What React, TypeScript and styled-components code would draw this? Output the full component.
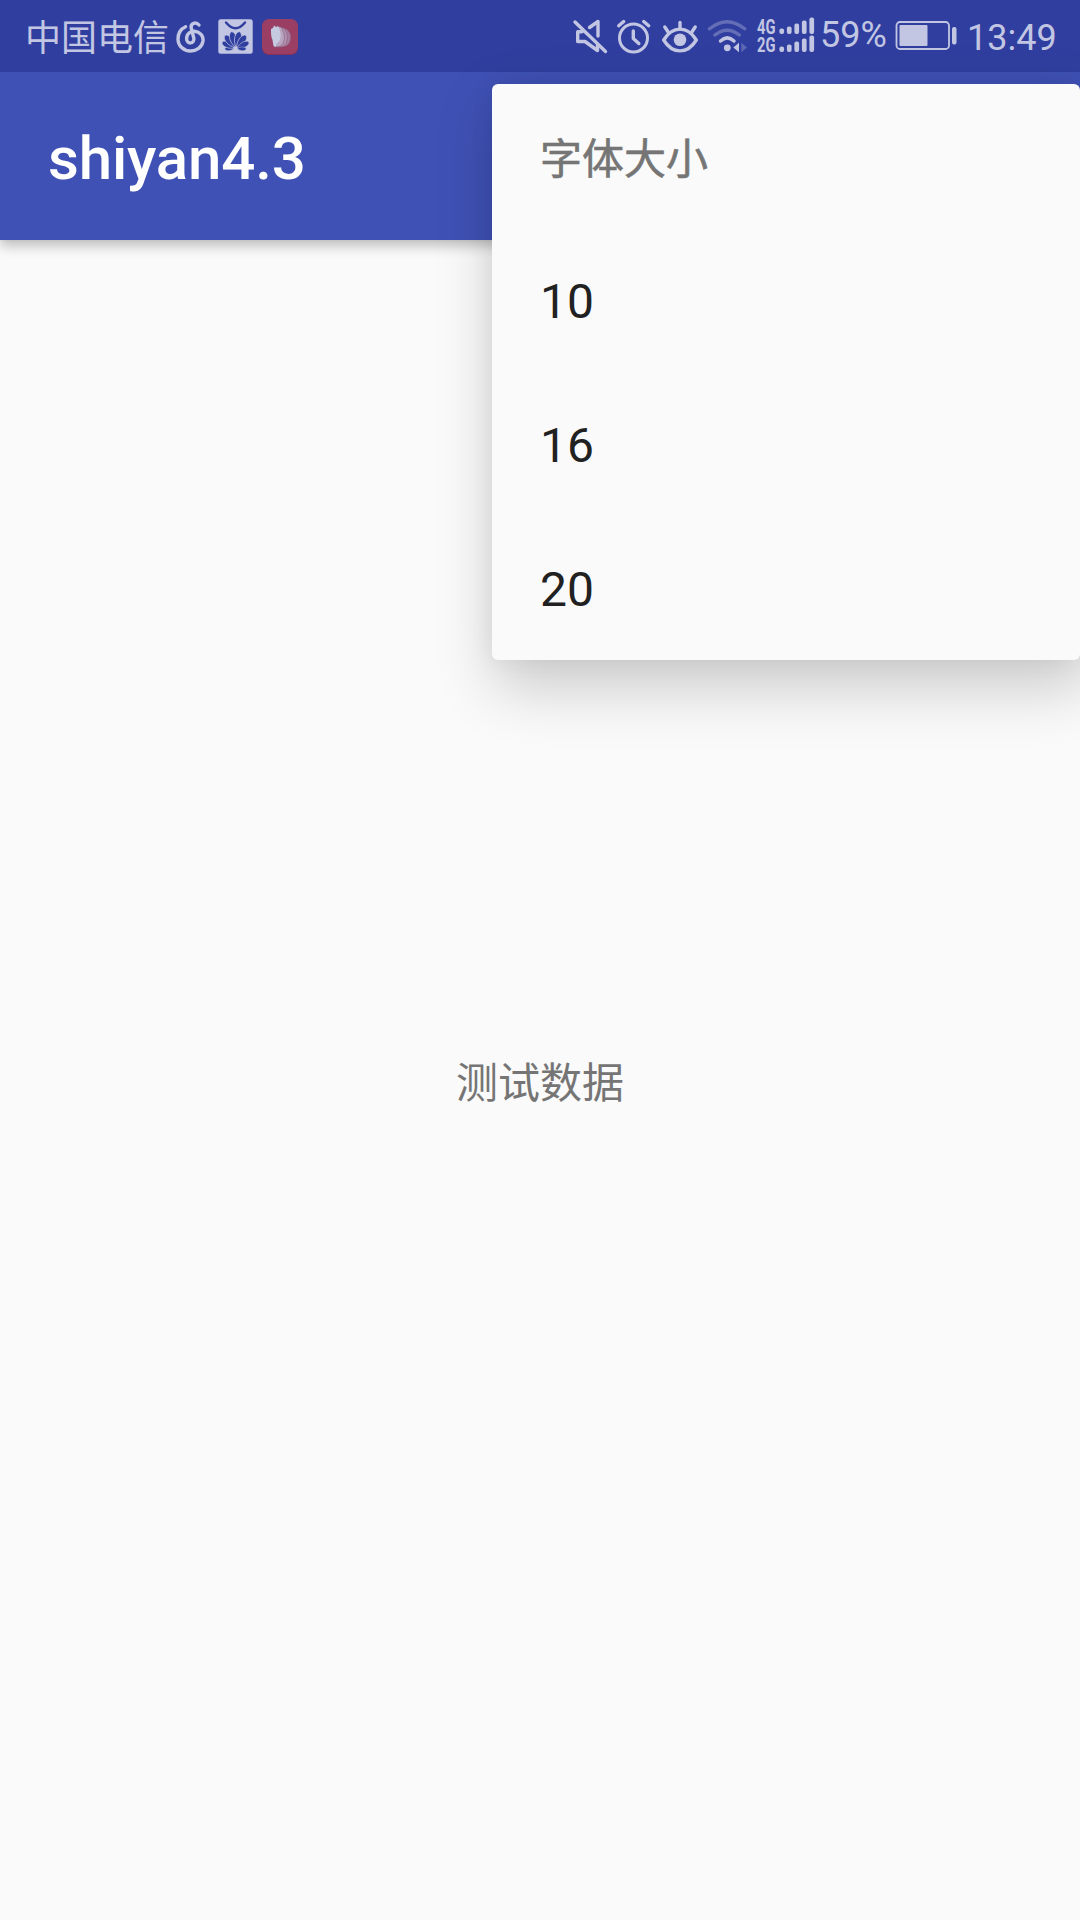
import React from "react";
import styled, { createGlobalStyle } from "styled-components";

const colors = {
  primary: "#3F51B5",
  primaryDark: "#303F9F",
  surface: "#FAFAFA",
  status: "#C2C6E3",
  secondaryText: "#757575",
  primaryText: "#212121",
};

const GlobalStyle = createGlobalStyle`
  * { box-sizing: border-box; }
  body {
    margin: 0;
    background: ${colors.surface};
    font-family: Roboto, "Noto Sans CJK SC", sans-serif;
  }
`;

const Screen = styled.div`
  position: relative;
  display: flex;
  flex-direction: column;
  width: 1080px;
  height: 1920px;
  overflow: hidden;
  background: ${colors.surface};
`;

const StatusBar = styled.header`
  display: flex;
  align-items: flex-start;
  justify-content: space-between;
  height: 72px;
  padding: 0 25px 0 25px;
  background: ${colors.primaryDark};
  color: ${colors.status};
`;

const StatusGroup = styled.div`
  display: flex;
  align-items: flex-start;
  height: 72px;
`;

const StatusText = styled.span<{ $width: number; $top: number; $before?: number }>`
  width: ${(p) => p.$width}px;
  margin-left: ${(p) => p.$before ?? 0}px;
  padding-top: ${(p) => p.$top}px;
  font-size: 36px;
  line-height: 42px;
  font-weight: 400;
  white-space: nowrap;
`;

const Glyph = styled.svg<{ $before?: number }>`
  display: block;
  flex: none;
  margin-left: ${(p) => p.$before ?? 0}px;
  overflow: visible;
`;

const AppBar = styled.div`
  display: flex;
  align-items: center;
  flex: none;
  height: 168px;
  padding: 6px 48px 0;
  background: ${colors.primary};
  box-shadow: 0 6px 12px rgba(0, 0, 0, 0.24), 0 0 4px rgba(0, 0, 0, 0.06);
  clip-path: inset(0 0 -40px 0);
`;

const Title = styled.h1`
  margin: 0;
  font-size: 60px;
  line-height: 70px;
  font-weight: 500;
  letter-spacing: -0.15px;
  color: #fff;
`;

const Content = styled.main`
  display: flex;
  flex: 1;
  align-items: center;
  justify-content: center;
`;

const Message = styled.p`
  margin: 0;
  padding-top: 8px;
  font-size: 42px;
  line-height: 56px;
  font-weight: 400;
  color: ${colors.secondaryText};
`;

const Menu = styled.div`
  position: absolute;
  top: 84px;
  right: 0;
  width: 588px;
  border-radius: 6px;
  background: ${colors.surface};
  box-shadow: 6px 24px 60px 4px rgba(0, 0, 0, 0.19), 0 0 24px rgba(0, 0, 0, 0.06);
`;

const MenuRow = styled.div`
  display: flex;
  align-items: center;
  height: 144px;
  padding: 2px 48px 0;
  font-size: 48px;
  color: ${colors.primaryText};
`;

const MenuHeader = styled(MenuRow)`
  padding: 0 48px 1px;
  font-size: 42px;
  font-weight: 400;
  -webkit-text-stroke: 0.6px ${colors.secondaryText};
  color: ${colors.secondaryText};
`;

interface GlyphBoxProps {
  x: number;
  width: number;
  before?: number;
  children: React.ReactNode;
}

/* Status glyphs share the coordinate grid of the status bar. */
const StatusGlyph = ({ x, width, before, children }: GlyphBoxProps) => (
  <Glyph
    $before={before}
    width={width}
    height={72}
    viewBox={`${x} 0 ${width} 72`}
    fill="none"
    stroke={colors.status}
    strokeWidth={3.4}
    strokeLinecap="round"
    strokeLinejoin="round"
  >
    {children}
  </Glyph>
);

const MusicIcon = () => (
  <StatusGlyph x={176} width={30} before={6}>
    <path d="M199 25C196 21.5 190.3 23 191.2 28L193.8 38C195 44.2 186.6 44.7 186.6 38.7C186.6 33.5 190.5 31 194.5 31.2C200 31.8 203.6 36 203 41C202 47.5 196.500 51 190.500 51C183.500 51 178 45.700 178 39C178 33 181.200 28.700 185.600 26.700" />
  </StatusGlyph>
);

const PETAL = "M235.500 49C231 43 231 37.500 233.800 34.500Q235.500 33 237.200 34.500C240 37.500 240 43 235.500 49Z";

const petals = [
  { angle: -90, size: 0.6 },
  { angle: -64, size: 0.88 },
  { angle: -38, size: 1.02 },
  { angle: -13, size: 1.05 },
  { angle: 13, size: 1.05 },
  { angle: 38, size: 1.02 },
  { angle: 64, size: 0.88 },
  { angle: 90, size: 0.6 },
];

const AppStoreIcon = () => (
  <StatusGlyph x={218} width={35} before={12}>
    <rect x="218.300" y="19.300" width="34.400" height="34.400" rx="2.500" fill={colors.status} stroke="none" />
    <path d="M226 22.500Q235.500 34 245 22.500" stroke={colors.primaryDark} strokeWidth="2.400" />
    <g fill={colors.primaryDark} stroke={colors.status} strokeWidth="0.700">
      {petals.map(({ angle, size }) => (
        <path
          key={angle}
          d={PETAL}
          transform={`rotate(${angle} 235.500 48.800) translate(235.500 47.300) scale(${size * 0.88} ${size}) translate(-235.500 -49)`}
        />
      ))}
    </g>
  </StatusGlyph>
);

const ReaderIcon = () => (
  <StatusGlyph x={262} width={36} before={9}>
    <rect x="262" y="20" width="36" height="35" rx="7" fill="#83305A" stroke="none" />
    <rect x="262" y="19" width="36" height="35" rx="7" fill="#9A3E64" stroke="none" />
    <g stroke="#8F5E83" strokeWidth="0.700">
      <path d="M281 28L287 29.500Q291 33 290.500 39Q290 44 286 46L279 47Z" fill="#A87F9F" />
      <path d="M279 27L284.500 28.500Q288 33 287.500 39Q287 44.500 283 46.500L277 47Z" fill="#B092AF" />
      <path d="M277 26L281.500 27.500Q285 33 284.500 39Q284 44 280 46.500L275 47Z" fill="#B8A6C0" />
    </g>
    <path d="M271 29L273 28L274 25.500L276 27L278 26.500Q281 31 280.500 37Q280 42 277 43L275.500 47L273.500 46L272.500 40Q270.800 37 271 29Z" fill="#C5CAE0" stroke="none" />
  </StatusGlyph>
);

const MuteIcon = () => (
  <StatusGlyph x={573} width={34}>
    <path d="M575 22L605.500 51.500" />
    <path d="M589.500 27.500L598 21.500V36" />
    <path d="M582 31.800H577.700V41.500H585L597.500 50.500V45" />
  </StatusGlyph>
);

const AlarmIcon = () => (
  <StatusGlyph x={617} width={34} before={10}>
    <circle cx="633.500" cy="38" r="14" strokeWidth="3" />
    <path d="M633.300 31V38.500L638.800 43.500" />
    <path d="M618.700 25.700L623.700 21.500M643.700 21.500L648.700 25.700" />
  </StatusGlyph>
);

const EyeIcon = () => (
  <StatusGlyph x={662} width={36} before={11}>
    <path d="M663.700 40C672.500 25.500 687.500 25.500 696.300 40C687.500 54.500 672.500 54.500 663.700 40Z" />
    <circle cx="680" cy="39.800" r="6.300" fill={colors.status} stroke="none" />
    <path d="M680 22.500V29M664.800 27L668.500 32.500M695.200 27L691.500 32.500" />
  </StatusGlyph>
);

const WifiIcon = () => (
  <StatusGlyph x={708} width={39} before={10}>
    <g opacity="0.350">
      <path d="M709.500 28.800Q727 14.500 744.700 28.800" />
      <path d="M715 35Q727.200 25.500 739.300 35" />
    </g>
    <path d="M720.500 41Q727.300 34.800 734 41" />
    <circle cx="727.300" cy="47.800" r="3.400" fill={colors.status} stroke="none" />
    <path d="M733.300 47.500L739 42.700V52.300Z" fill={colors.status} stroke="none" />
    <path d="M741.300 42.700L747 47.500L741.300 52.300Z" fill={colors.status} stroke="none" opacity="0.300" />
  </StatusGlyph>
);

const NetworkText = styled.text`
  font-family: Roboto, sans-serif;
  font-size: 20px;
  font-weight: 700;
`;

const barHeights = [5.5, 7.5, 10.5, 13.5, 16.5];

const SignalIcon = () => (
  <StatusGlyph x={757} width={58} before={10}>
    <g fill={colors.status} stroke="none">
      {[34, 52].map((base, row) => (
        <React.Fragment key={base}>
          <NetworkText x="757" y={base - 0.3} textLength="18.500" lengthAdjust="spacingAndGlyphs">
            {row === 0 ? "4G" : "2G"}
          </NetworkText>
          {barHeights.map((h, i) => (
            <rect key={h} x={779.4 + i * 7.5} y={base - h} width="4.700" height={h} rx="2" />
          ))}
        </React.Fragment>
      ))}
    </g>
  </StatusGlyph>
);

const BatteryIcon = () => (
  <StatusGlyph x={895} width={62} before={10}>
    <rect x="896.500" y="22" width="52.500" height="27" rx="3.500" strokeWidth="1.800" />
    <rect x="899.500" y="25" width="28" height="21" rx="1" fill={colors.status} stroke="none" />
    <rect x="952" y="27" width="4.500" height="17.500" rx="2" fill={colors.status} stroke="none" />
  </StatusGlyph>
);

const sizes = ["10", "16", "20"];

export default function App() {
  return (
    <>
      <GlobalStyle />
      <Screen>
        <StatusBar>
          <StatusGroup>
            <StatusText $width={145} $top={18}>
              中国电信
            </StatusText>
            <MusicIcon />
            <AppStoreIcon />
            <ReaderIcon />
          </StatusGroup>
          <StatusGroup>
            <MuteIcon />
            <AlarmIcon />
            <EyeIcon />
            <WifiIcon />
            <SignalIcon />
            <StatusText $width={65} $top={14} $before={5}>
              59%
            </StatusText>
            <BatteryIcon />
            <StatusText $width={88} $top={17} $before={10}>
              13:49
            </StatusText>
          </StatusGroup>
        </StatusBar>
        <AppBar>
          <Title>shiyan4.3</Title>
        </AppBar>
        <Content>
          <Message>测试数据</Message>
        </Content>
        <Menu>
          <MenuHeader>字体大小</MenuHeader>
          {sizes.map((size) => (
            <MenuRow key={size}>{size}</MenuRow>
          ))}
        </Menu>
      </Screen>
    </>
  );
}
